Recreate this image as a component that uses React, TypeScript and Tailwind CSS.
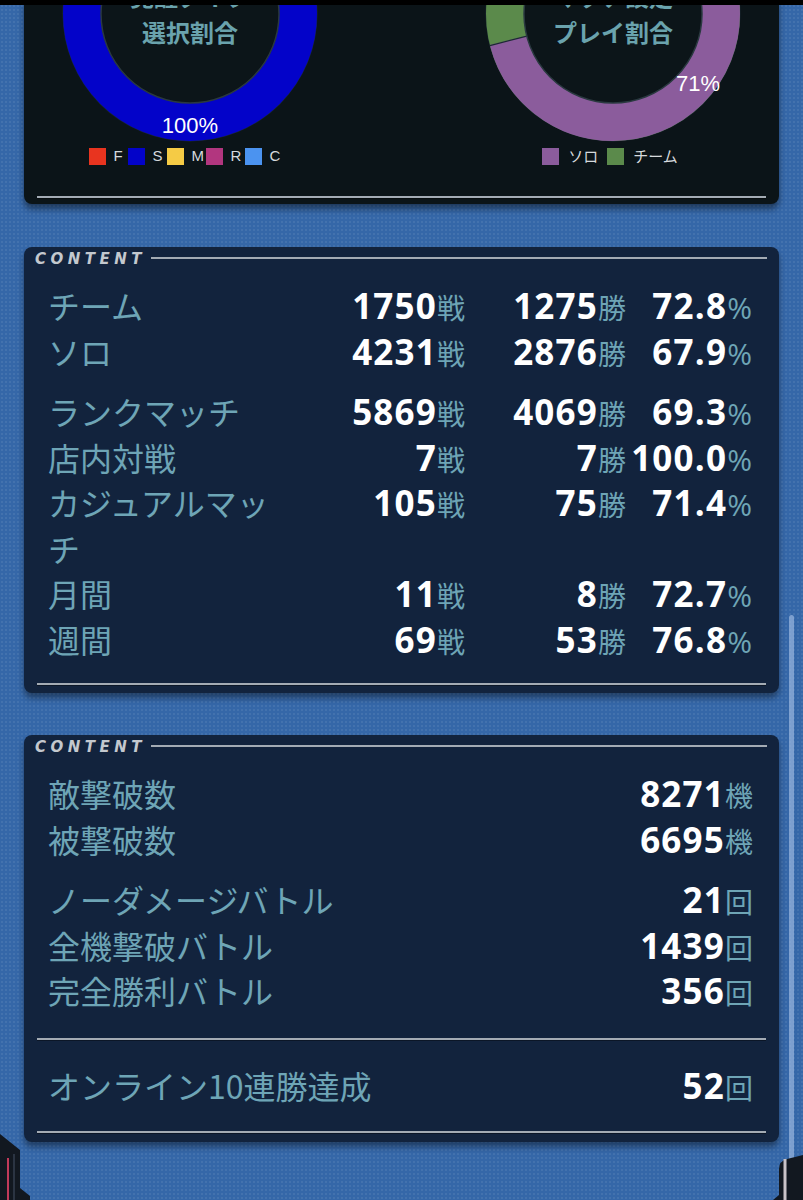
import React from 'react';

const TEAL = '#6ea5b6';

type StatRow = { label: string; battles: number; wins: number; rate: string };

const MATCH_STATS: StatRow[][] = [
    [
        { label: 'チーム', battles: 1750, wins: 1275, rate: '72.8' },
        { label: 'ソロ', battles: 4231, wins: 2876, rate: '67.9' },
    ],
    [
        { label: 'ランクマッチ', battles: 5869, wins: 4069, rate: '69.3' },
        { label: '店内対戦', battles: 7, wins: 7, rate: '100.0' },
        { label: 'カジュアルマッチ', battles: 105, wins: 75, rate: '71.4' },
        { label: '月間', battles: 11, wins: 8, rate: '72.7' },
        { label: '週間', battles: 69, wins: 53, rate: '76.8' },
    ],
];

const BATTLE_STATS: { label: string; value: number; unit: string }[][] = [
    [
        { label: '敵撃破数', value: 8271, unit: '機' },
        { label: '被撃破数', value: 6695, unit: '機' },
    ],
    [
        { label: 'ノーダメージバトル', value: 21, unit: '回' },
        { label: '全機撃破バトル', value: 1439, unit: '回' },
        { label: '完全勝利バトル', value: 356, unit: '回' },
    ],
];

const cjk = { fontFamily: '"Noto Sans CJK JP", "Noto Sans", sans-serif' };
const num = { fontFamily: '"Open Sans", "Noto Sans CJK JP", sans-serif' };
const arial = { fontFamily: '"Liberation Sans", "Noto Sans CJK JP", sans-serif' };

const Divider = () => <div className="mx-[13px] h-[2px] bg-[#a3abb4] shadow-[0_1px_0_rgba(0,0,0,0.35)]" />;

const ContentHeader = () => (
    <div className="flex items-center gap-[5px] pl-[11px] pr-[12px] pt-[6px] h-[18px]">
        <span
            className="text-[15px] leading-[12px] font-bold italic tracking-[0.3em] text-[#c3c8ce]"
            style={{ fontFamily: '"DejaVu Sans", sans-serif' }}
        >
            CONTENT
        </span>
        <div className="flex-1 h-[2px] -mt-[3px] bg-[#a3abb4]" />
    </div>
);

const Num = ({ value, unit, unitStyle }: { value: string | number; unit: string; unitStyle?: React.CSSProperties }) => (
    <span className="flex justify-end items-baseline">
        <span className="text-[35px] font-bold tracking-[1.2px] text-white" style={num}>{value}</span>
        <span className="text-[28px] leading-none" style={{ color: TEAL, ...(unitStyle || cjk) }}>{unit}</span>
    </span>
);

const Donut = ({ children, title, pct, pctPos }: { children: React.ReactNode; title: string[]; pct: string; pctPos: [number, number] }) => (
    <div className="relative w-[260px] h-[145px]">
        <svg width="260" height="145" viewBox="0 0 260 145">
            <circle cx="130" cy="14" r="127.5" fill="#1c2a33" />
            {children}
            <circle cx="130" cy="14" r="89" fill="#0c1519" stroke="#2a3940" strokeWidth="1.5" />
            <text x={pctPos[0]} y={pctPos[1]} textAnchor="middle" fill="#ffffff" fontSize="22" style={arial}>{pct}</text>
        </svg>
        <div className="absolute left-0 right-0 top-[-22px] text-center text-[24px] leading-[36px] font-bold text-[#6aa3ad]" style={cjk}>
            {title.map(t => <div key={t}>{t}</div>)}
        </div>
    </div>
);

const C = 2 * Math.PI * 108;

const App: React.FC = () => {
    return (
        <div
            className="relative w-[803px] h-[1200px] overflow-hidden bg-[#3567a8] bg-[radial-gradient(circle,rgba(255,255,255,0.07)_1px,transparent_1.2px)] bg-[length:4px_4px]"
        >
            <div className="px-[24px] flex flex-col gap-[42px]">
                {/* charts */}
                <section className="mb-[1px] bg-[#0b1418] rounded-b-[8px] overflow-hidden shadow-[0_5px_6px_rgba(0,0,0,0.45)] pb-[6px]">
                    <div className="flex pl-[36px] gap-[163px]">
                        <div className="flex flex-col items-center">
                            <Donut title={['覚醒タイプ', '選択割合']} pct="100%" pctPos={[130, 133]}>
                                <circle cx="130" cy="14" r="108" fill="none" stroke="#0303c9" strokeWidth="38" />
                            </Donut>
                            <div className="flex items-center h-[17px] mt-[3px] -ml-[8px] text-[15px] text-[#d6dadd]" style={arial}>
                                {[['#e8341f', 'F'], ['#0303c9', 'S'], ['#f5cb45', 'M'], ['#b2367f', 'R'], ['#4b93f0', 'C']].map(([c, l]) => (
                                    <span key={l} className="flex items-center">
                                        <span className="w-[17px] h-[17px]" style={{ background: c }} />
                                        <span className="w-[22px] pl-[8px]">{l}</span>
                                    </span>
                                ))}
                            </div>
                        </div>
                        <div className="flex flex-col items-center">
                            <Donut title={['マッチ設定', 'プレイ割合']} pct="71%" pctPos={[215, 91]}>
                                <circle cx="130" cy="14" r="108" fill="none" stroke="#5b8a4b" strokeWidth="38" />
                                <circle
                                    cx="130" cy="14" r="108" fill="none" stroke="#8b5c9c" strokeWidth="38"
                                    strokeDasharray={`${C * 0.71} ${C}`}
                                    transform="rotate(-90 130 14)"
                                />
                                <line x1="43.8" y1="36.1" x2="6.9" y2="45.6" stroke="#1c2a33" strokeWidth="1.2" />
                            </Donut>
                            <div className="flex items-center h-[17px] gap-[9px] mt-[3px] -ml-[6px] text-[15px] text-[#d6dadd]" style={cjk}>
                                <span className="w-[17px] h-[17px] bg-[#8b5c9c]" />
                                <span>ソロ</span>
                                <span className="w-[17px] h-[17px] bg-[#5b8a4b]" />
                                <span>チーム</span>
                            </div>
                        </div>
                    </div>
                    <div className="mt-[31px]">
                        <Divider />
                    </div>
                </section>

                {/* match records */}
                <section className="bg-[#12233d] rounded-[8px] shadow-[0_5px_6px_rgba(0,0,0,0.4)] pb-[8px]">
                    <ContentHeader />
                    <div className="pl-[24px] pr-[26px] pt-[18px] pb-[21px] flex flex-col gap-[15px]">
                        {MATCH_STATS.map((group, gi) => (
                            <div key={gi} className="grid grid-cols-[250px_167px_161px_126px] leading-[45.5px]">
                                {group.map(row => (
                                    <React.Fragment key={row.label}>
                                        <span className="text-[32px] pr-[8px]" style={{ ...cjk, color: TEAL }}>{row.label}</span>
                                        <Num value={row.battles} unit="戦" />
                                        <Num value={row.wins} unit="勝" />
                                        <Num value={row.rate} unit="%" unitStyle={{ fontFamily: '"Open Sans", sans-serif', fontSize: 30 }} />
                                    </React.Fragment>
                                ))}
                            </div>
                        ))}
                    </div>
                    <Divider />
                </section>

                {/* battle records */}
                <section className="bg-[#12233d] rounded-[8px] shadow-[0_5px_6px_rgba(0,0,0,0.4)] pb-[9px]">
                    <ContentHeader />
                    <div className="pl-[24px] pr-[26px] pt-[18px] pb-[24px] flex flex-col gap-[15px]">
                        {BATTLE_STATS.map((group, gi) => (
                            <div key={gi} className="flex flex-col leading-[45.5px]">
                                {group.map(row => (
                                    <div key={row.label} className="flex justify-between">
                                        <span className="text-[32px]" style={{ ...cjk, color: TEAL }}>{row.label}</span>
                                        <Num value={row.value} unit={row.unit} />
                                    </div>
                                ))}
                            </div>
                        ))}
                    </div>
                    <Divider />
                    <div className="pl-[24px] pr-[26px] py-[23px] flex justify-between leading-[45px]">
                        <span className="text-[32px]" style={{ ...cjk, color: TEAL }}>オンライン10連勝達成</span>
                        <Num value={52} unit="回" />
                    </div>
                    <Divider />
                </section>
            </div>

            {/* top edge */}
            <div className="absolute top-0 left-0 right-0 h-[5px] bg-black" />

            {/* scroll indicator */}
            <div className="absolute right-[9px] top-[615px] w-[5px] h-[600px] rounded-full bg-[#9bb8e0]/70" />

            {/* bottom frame corners */}
            <svg className="absolute left-0 bottom-0" width="40" height="70" viewBox="0 0 40 70">
                <path d="M0 4 L20 20 L20 58 L30 66 L30 70 L0 70 Z" fill="#121820" />
                <path d="M8 28 L8 70" stroke="#c23a5a" strokeWidth="2" />
                <path d="M14 24 L14 70" stroke="#2b3442" strokeWidth="2" />
            </svg>
            <svg className="absolute right-0 bottom-0" width="30" height="45" viewBox="0 0 30 45">
                <path d="M30 0 L30 45 L0 45 L6 40 L6 14 Q6 6 14 4 Z" fill="#121820" />
                <path d="M12 4 L12 45" stroke="#c9c3c8" strokeWidth="3" />
            </svg>
        </div>
    );
};

export default App;
